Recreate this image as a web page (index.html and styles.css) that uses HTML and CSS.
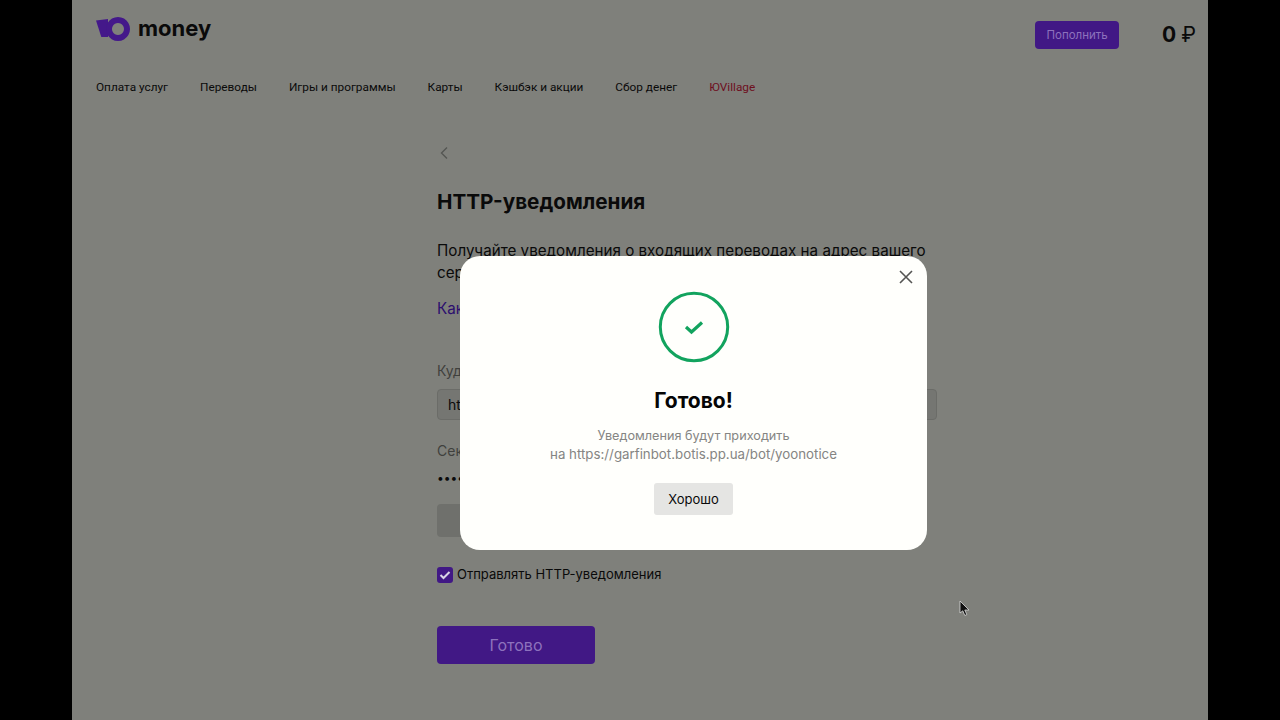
FILE: index.html
```html
<!DOCTYPE html>
<html lang="ru">

<head>
    <meta charset="UTF-8">
    <title>HTTP-уведомления</title>
    <link rel="stylesheet" href="styles.css">
</head>

<body>
    <div class="app">
        <header class="top-bar">
            <div class="logo">
                <svg class="logo-mark" width="36" height="26" viewBox="0 0 36 26">
                    <path d="M1 4.500 L13 3 L13 21 L6.300 21 Z" fill="#44188a" />
                    <path fill-rule="evenodd" d="M23 1 a12 12 0 1 0 0.010 0 Z M23 7 a6 6 0 1 1 -0.010 0 Z" fill="#44188a" />
                </svg>
                <span class="logo-text">money</span>
            </div>
            <div class="top-actions">
                <button class="btn-topup">Пополнить</button>
                <div class="balance">
                    <span class="balance-num">0</span>
                    <span class="balance-cur">₽</span>
                </div>
            </div>
        </header>

        <nav class="main-nav">
            <a>Оплата услуг</a>
            <a>Переводы</a>
            <a>Игры и программы</a>
            <a>Карты</a>
            <a>Кэшбэк и акции</a>
            <a>Сбор денег</a>
            <a class="nav-red">ЮVillage</a>
        </nav>

        <main class="content">
            <svg class="back" width="10" height="14" viewBox="0 0 10 14">
                <path d="M8 1.500 L2.500 7 L8 12.500" fill="none" stroke="#555653" stroke-width="1.400" />
            </svg>
            <h1>HTTP-уведомления</h1>
            <p class="intro">Получайте уведомления о входящих переводах на адрес вашего сервера</p>
            <a class="how-link">Как это работает</a>

            <label class="field-label label-first">Куда отправлять</label>
            <div class="input-box">https://garfinbot.botis.pp.ua/bot/yoonotice</div>
            <label class="field-label label-second">Секретное слово</label>
            <div class="secret">••••••••••••••••</div>
            <div class="gray-btn"></div>

            <div class="check-row">
                <span class="checkbox">
                    <svg width="12" height="10" viewBox="0 0 12 10">
                        <path d="M1.500 5 L4.500 8 L10.500 2" fill="none" stroke="#d9d3e6" stroke-width="2" />
                    </svg>
                </span>
                <span>Отправлять HTTP-уведомления</span>
            </div>
            <button class="btn-done">Готово</button>
        </main>

        <div class="modal">
            <svg class="modal-close" width="14" height="14" viewBox="0 0 14 14">
                <path d="M1 1 L13 13 M13 1 L1 13" fill="none" stroke="#555553" stroke-width="1.600" />
            </svg>
            <svg class="success-icon" width="72" height="72" viewBox="0 0 72 72">
                <circle cx="36" cy="36" r="33.700" fill="none" stroke="#12a35e" stroke-width="3" />
                <path d="M28 36 L33.500 41 L44 31.500" fill="none" stroke="#12a35e" stroke-width="3.200" />
            </svg>
            <h2>Готово!</h2>
            <p class="modal-text"><span class="modal-text-first">Уведомления будут приходить</span><br>на https://garfinbot.botis.pp.ua/bot/yoonotice</p>
            <button class="btn-ok">Хорошо</button>
        </div>

        <svg class="cursor" width="12" height="18" viewBox="0 0 12 18">
            <path d="M1 1 L1 13 L3.800 10.800 L5.800 15.500 L7.800 14.600 L5.800 10 L10 10 Z" fill="#111" stroke="#d8d8d8" stroke-width="0.800" />
        </svg>
    </div>
</body>

</html>
```

FILE: styles.css
```css
* {
    box-sizing: border-box;
}

body {
    margin: 0;
    background-color: #000;
    font-family: 'Inter', 'Noto Sans', sans-serif;
    color: #0a0a0a;
}

.app {
    position: relative;
    width: 1136px;
    height: 720px;
    margin: 0 auto;
    overflow: hidden;
    background-color: #7f807b;
}

/* header */
.top-bar {
    display: flex;
    justify-content: space-between;
    align-items: flex-start;
    height: 76px;
    padding: 16px 12px 0 23px;
}

.logo {
    display: flex;
    align-items: center;
    gap: 7px;
}

.logo-text {
    font-size: 22px;
    font-weight: 700;
    line-height: 26px;
    margin-top: -2px;
}

.top-actions {
    display: flex;
    align-items: center;
    gap: 43px;
    margin-top: 5px;
}

.btn-topup {
    width: 84px;
    height: 28px;
    padding: 0;
    border: 0;
    border-radius: 4px;
    background-color: #411885;
    color: #8d72bd;
    font-family: inherit;
    font-size: 11.5px;
}

.balance {
    display: flex;
    gap: 5px;
    font-size: 21px;
    line-height: 28px;
}

.balance-num {
    font-weight: 700;
}

.main-nav {
    display: flex;
    gap: 32px;
    padding-left: 24px;
    font-family: 'Roboto', sans-serif;
    font-size: 11.8px;
    line-height: 22px;
}

.nav-red {
    color: #6e0f1e;
}

/* form under the dialog */
.content {
    display: flex;
    flex-direction: column;
    align-items: flex-start;
    width: 500px;
    margin-left: 365px;
    padding-top: 48px;
}

.back {
    margin-left: 2px;
}

h1 {
    margin: 28px 0 0;
    font-size: 20.7px;
    line-height: 28px;
    font-weight: 700;
}

.intro {
    margin: 24px 0 0;
    font-size: 15.2px;
    line-height: 22px;
}

.how-link {
    margin-top: 14px;
    font-size: 15.2px;
    line-height: 22px;
    color: #2c0f6e;
}

.field-label {
    font-size: 14px;
    line-height: 20px;
    color: #3f403d;
}

.label-first {
    margin-top: 41px;
}

.input-box {
    width: 500px;
    height: 31px;
    margin-top: 8px;
    padding: 0 10px;
    border: 1px solid #6b6c68;
    border-radius: 4px;
    background-color: #757672;
    font-size: 14px;
    line-height: 29px;
}

.label-second {
    margin-top: 21px;
}

.secret {
    margin-top: 10px;
    font-size: 12px;
    line-height: 14px;
}

.gray-btn {
    width: 150px;
    height: 33px;
    margin-top: 19px;
    border-radius: 4px;
    background-color: #6f706c;
}

.check-row {
    display: flex;
    align-items: center;
    gap: 4px;
    margin-top: 29px;
    font-size: 13px;
    line-height: 17px;
}

.checkbox {
    display: flex;
    align-items: center;
    justify-content: center;
    width: 16px;
    height: 16px;
    border-radius: 3px;
    background-color: #411885;
}

.btn-done {
    width: 158px;
    height: 38px;
    margin-top: 43px;
    padding: 0;
    border: 0;
    border-radius: 4px;
    background-color: #411885;
    color: #8d72bd;
    font-family: inherit;
    font-size: 16px;
}

/* dialog */
.modal {
    position: absolute;
    left: 388px;
    top: 256px;
    display: flex;
    flex-direction: column;
    align-items: center;
    width: 467px;
    height: 294px;
    padding-top: 35px;
    border-radius: 20px;
    background-color: #fffffc;
}

.modal-close {
    position: absolute;
    top: 14px;
    right: 14px;
}

h2 {
    margin: 24px 0 0;
    font-size: 21px;
    line-height: 28px;
    font-weight: 700;
    color: #050505;
}

.modal-text {
    margin: 11px 0 0;
    font-size: 13.3px;
    line-height: 18px;
    text-align: center;
    color: #858583;
}

.modal-text-first {
    font-size: 12.7px;
}

.btn-ok {
    width: 79px;
    height: 32px;
    margin-top: 20px;
    padding: 0;
    border: 0;
    border-radius: 3px;
    background-color: #e5e5e3;
    color: #0a0a0a;
    font-family: inherit;
    font-size: 13px;
}

.cursor {
    position: absolute;
    left: 887px;
    top: 600px;
}
```
